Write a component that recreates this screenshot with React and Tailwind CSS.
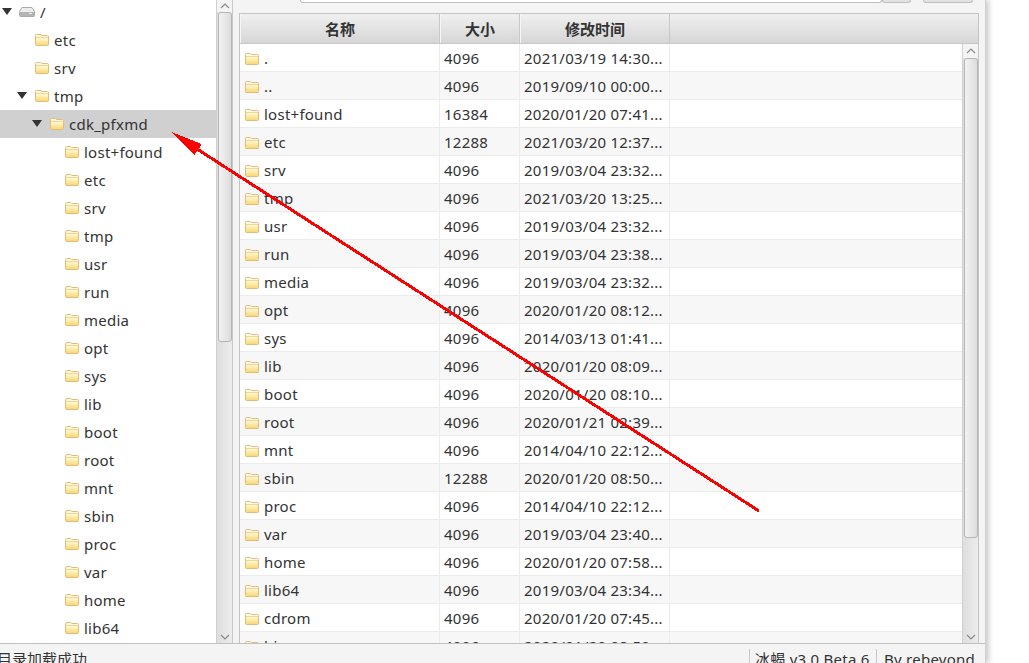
import React from 'react';

const treeRows = [
    { name: '/', depth: 0, open: true, drive: true },
    { name: 'etc', depth: 1 },
    { name: 'srv', depth: 1 },
    { name: 'tmp', depth: 1, open: true },
    { name: 'cdk_pfxmd', depth: 2, open: true, selected: true },
    { name: 'lost+found', depth: 3 },
    { name: 'etc', depth: 3 },
    { name: 'srv', depth: 3 },
    { name: 'tmp', depth: 3 },
    { name: 'usr', depth: 3 },
    { name: 'run', depth: 3 },
    { name: 'media', depth: 3 },
    { name: 'opt', depth: 3 },
    { name: 'sys', depth: 3 },
    { name: 'lib', depth: 3 },
    { name: 'boot', depth: 3 },
    { name: 'root', depth: 3 },
    { name: 'mnt', depth: 3 },
    { name: 'sbin', depth: 3 },
    { name: 'proc', depth: 3 },
    { name: 'var', depth: 3 },
    { name: 'home', depth: 3 },
    { name: 'lib64', depth: 3 },
];

const fileRows = [
    ['.', '4096', '2021/03/19 14:30...'],
    ['..', '4096', '2019/09/10 00:00...'],
    ['lost+found', '16384', '2020/01/20 07:41...'],
    ['etc', '12288', '2021/03/20 12:37...'],
    ['srv', '4096', '2019/03/04 23:32...'],
    ['tmp', '4096', '2021/03/20 13:25...'],
    ['usr', '4096', '2019/03/04 23:32...'],
    ['run', '4096', '2019/03/04 23:38...'],
    ['media', '4096', '2019/03/04 23:32...'],
    ['opt', '4096', '2020/01/20 08:12...'],
    ['sys', '4096', '2014/03/13 01:41...'],
    ['lib', '4096', '2020/01/20 08:09...'],
    ['boot', '4096', '2020/01/20 08:10...'],
    ['root', '4096', '2020/01/21 02:39...'],
    ['mnt', '4096', '2014/04/10 22:12...'],
    ['sbin', '12288', '2020/01/20 08:50...'],
    ['proc', '4096', '2014/04/10 22:12...'],
    ['var', '4096', '2019/03/04 23:40...'],
    ['home', '4096', '2020/01/20 07:58...'],
    ['lib64', '4096', '2019/03/04 23:34...'],
    ['cdrom', '4096', '2020/01/20 07:45...'],
    ['bin', '4096', '2020/01/20 08:50...'],
];

function Folder() {
    return (
        <svg width="14" height="12" viewBox="0 0 14 12" className="shrink-0">
            <defs>
                <linearGradient id="folderFill" x1="0" y1="0" x2="0" y2="1">
                    <stop offset="0" stopColor="#fffdf2" />
                    <stop offset="0.4" stopColor="#fef5c8" />
                    <stop offset="1" stopColor="#f7d66c" />
                </linearGradient>
            </defs>
            <path d="M0.5 1.5Q0.5 0.5 1.5 0.5H5.5L6.5 1.5H12.5Q13.5 1.5 13.5 2.5V10.5Q13.5 11.5 12.5 11.5H1.5Q0.5 11.5 0.5 10.5Z" fill="url(#folderFill)" stroke="#e3bc7c" />
            <path d="M1 3.5H13" stroke="#f1d596" />
        </svg>
    );
}

function Drive() {
    return (
        <svg width="16" height="10" viewBox="0 0 16 10" className="shrink-0 -ml-px">
            <path d="M3 0.5H13L15.5 4.5V8.5Q15.5 9.5 14.5 9.5H1.5Q0.5 9.5 0.5 8.5V4.5Z" fill="#ececec" stroke="#a8a8a8" />
            <rect x="1" y="5" width="14" height="4" fill="#b4b4b4" />
            <rect x="10" y="6" width="3" height="1" fill="#eeeeee" />
        </svg>
    );
}

function Caret() {
    return (
        <svg width="10" height="7" viewBox="0 0 10 7" className="shrink-0">
            <path d="M0 0H10L5 7Z" fill="#333333" />
        </svg>
    );
}

function Chevron({ down }) {
    return (
        <svg width="10" height="6" viewBox="0 0 10 6" className="shrink-0">
            <path d={down ? 'M1 1L5 5L9 1' : 'M1 5L5 1L9 5'} fill="none" stroke="#8a8a8a" strokeWidth="1.2" />
        </svg>
    );
}

function Scrollbar({ thumbClass, topClass }) {
    return (
        <div className="w-4 shrink-0 flex flex-col items-center bg-[#e6e6e6] bg-gradient-to-r from-[#dedede] to-[#ececec] border-l border-[#d0d0d0]">
            <div className={`${topClass} w-full bg-[#f4f4f4] flex items-center justify-center shrink-0`}>
                <Chevron />
            </div>
            <div className={`${thumbClass} w-[14px] shrink-0 rounded-[3px] border border-[#b5b5b5] bg-gradient-to-r from-[#f2f2f2] to-[#dcdcdc]`} />
            <div className="flex-1" />
            <div className="h-[13px] w-full flex items-center justify-center shrink-0">
                <Chevron down />
            </div>
        </div>
    );
}

function TreeRow({ row }) {
    const indentClass = ['pl-[2px]', 'pl-[17px]', 'pl-[32px]', 'pl-[47px]'][row.depth];
    return (
        <div className={`h-7 shrink-0 flex items-center ${indentClass} ${row.selected ? 'bg-[#d0d0d0]' : ''}`}>
            <span className="w-[18px] shrink-0 flex -translate-y-[1px]">{row.open && <Caret />}</span>
            {row.drive ? <Drive /> : <Folder />}
            <span className="ml-[5px]">{row.name}</span>
        </div>
    );
}

function HeaderCell({ className, children }) {
    return (
        <div className={`${className} h-full shrink-0 flex items-center justify-center pt-[2px] font-bold tracking-normal border-l border-[#f6f6f6] border-r border-r-[#c8c8c8] bg-gradient-to-b from-[#f0f0f0] to-[#d6d6d6]`}>
            {children}
        </div>
    );
}

function FileRow({ row, odd }) {
    return (
        <div className={`h-7 shrink-0 flex items-center border-b border-[#ececec] ${odd ? 'bg-[#f7f7f7]' : 'bg-white'}`}>
            <div className="w-[200px] shrink-0 h-full flex items-center pt-[2px] pl-[5px] gap-[5px] border-r border-[#ececec]">
                <Folder />
                <span>{row[0]}</span>
            </div>
            <div className="w-[80px] shrink-0 h-full flex items-center pt-[2px] pl-[4px] border-r border-[#ececec]">{row[1]}</div>
            <div className="w-[150px] shrink-0 h-full flex items-center pt-[2px] pl-[4px] border-r border-[#ececec] whitespace-nowrap">{row[2]}</div>
        </div>
    );
}

export default function App() {
    return (
        <div className="relative w-[1029px] h-[663px] overflow-hidden bg-white text-[15px] tracking-[0.25px] text-[#333333] font-['Noto_Sans','Noto_Sans_CJK_SC',sans-serif]">
            {/* window */}
            <div className="w-[986px] h-full flex flex-col bg-[#f4f4f4] border-r border-[#d0d0d0] shadow-[3px_0_5px_rgba(0,0,0,0.2)]">
                <div className="flex-1 min-h-0 flex">
                    {/* tree */}
                    <div className="w-[233px] shrink-0 flex border-r border-[#c8c8c8] bg-white">
                        <div className="flex-1 overflow-hidden flex flex-col -mt-[2px]">
                            {treeRows.map((row, i) => <TreeRow key={i} row={row} />)}
                        </div>
                        <Scrollbar thumbClass="h-[330px]" topClass="h-3" />
                    </div>

                    {/* right side */}
                    <div className="flex-1 min-w-0 flex flex-col pl-[6px] pr-[6px]">
                        {/* path bar, only its lower edge is still in view */}
                        <div className="h-[13px] shrink-0 flex items-start pl-[61px]">
                            <div className="w-[582px] h-[3px] bg-white border-x border-b border-[#c0c0c0] rounded-b-[3px]" />
                            <div className="w-[29px] h-[3px] bg-[#e2e2e2] border-x border-b border-[#c0c0c0] rounded-b-[3px]" />
                            <div className="w-[50px] h-[3px] ml-[12px] bg-[#e2e2e2] border-x border-b border-[#c0c0c0] rounded-b-[3px]" />
                        </div>
                        <div className="flex-1 min-h-0 flex flex-col border-x border-t border-[#c4c4c4] bg-white">
                            <div className="h-[30px] shrink-0 flex border-b border-[#c8c8c8]">
                                <HeaderCell className="w-[200px]">名称</HeaderCell>
                                <HeaderCell className="w-[80px]">大小</HeaderCell>
                                <HeaderCell className="w-[150px]">修改时间</HeaderCell>
                                <div className="flex-1 bg-gradient-to-b from-[#f0f0f0] to-[#d6d6d6]" />
                            </div>
                            <div className="flex-1 min-h-0 flex">
                                <div className="flex-1 min-w-0 overflow-hidden flex flex-col">
                                    {fileRows.map((row, i) => <FileRow key={i} row={row} odd={i % 2 === 1} />)}
                                </div>
                                <Scrollbar thumbClass="h-[480px]" topClass="h-[14px]" />
                            </div>
                        </div>
                    </div>
                </div>

                {/* status bar */}
                <div className="h-5 shrink-0 flex items-start border-t border-[#c0c0c0] leading-[20px] pt-[5px] overflow-hidden">
                    <span className="-ml-[3px] flex-1 tracking-normal">目录加载成功</span>
                    <span className="w-[127px] shrink-0 pl-[5px] border-l border-[#c8c8c8] whitespace-nowrap">冰蝎 v3.0 Beta 6</span>
                    <span className="w-[109px] shrink-0 pl-[7px] border-l border-[#c8c8c8] whitespace-nowrap">By rebeyond</span>
                </div>
            </div>

            {/* annotation arrow drawn over the screenshot */}
            <svg className="absolute inset-0 pointer-events-none" width="1029" height="663" viewBox="0 0 1029 663" shapeRendering="crispEdges">
                <path d="M759 511L197 149" stroke="#ff0000" strokeWidth="3" fill="none" />
                <path d="M170.5 131.5L201.5 144L199 148.5L194.5 154.5Z" fill="#ff0000" />
            </svg>
        </div>
    );
}
